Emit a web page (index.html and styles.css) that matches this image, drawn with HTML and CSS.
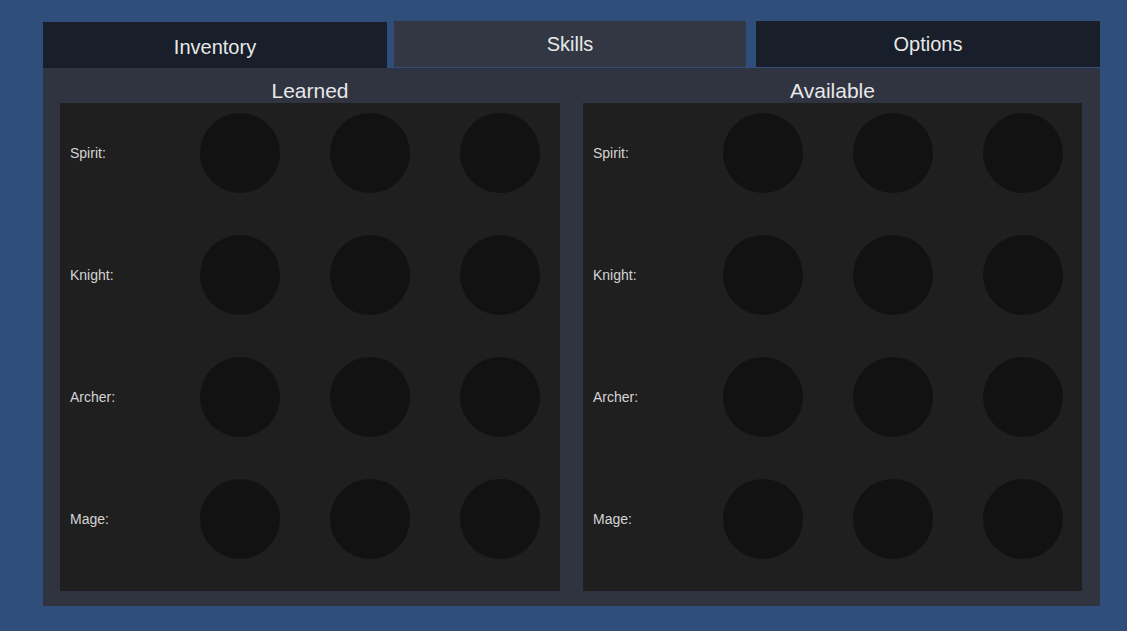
FILE: index.html
```html
<!DOCTYPE html>
<html>
<head>
<meta charset="utf-8">
<link rel="stylesheet" href="styles.css">
</head>
<body>
<div class="app">
  <div class="tabs">
    <div class="tab tab-inventory">Inventory</div>
    <div class="tab tab-skills">Skills</div>
    <div class="tab tab-options">Options</div>
  </div>
  <div class="panel">
    <div class="column">
      <div class="title">Learned</div>
      <div class="box">
        <div class="row"><div class="label">Spirit:</div><div class="slot"></div><div class="slot"></div><div class="slot"></div></div>
        <div class="row"><div class="label">Knight:</div><div class="slot"></div><div class="slot"></div><div class="slot"></div></div>
        <div class="row"><div class="label">Archer:</div><div class="slot"></div><div class="slot"></div><div class="slot"></div></div>
        <div class="row"><div class="label">Mage:</div><div class="slot"></div><div class="slot"></div><div class="slot"></div></div>
      </div>
    </div>
    <div class="column">
      <div class="title">Available</div>
      <div class="box">
        <div class="row"><div class="label">Spirit:</div><div class="slot"></div><div class="slot"></div><div class="slot"></div></div>
        <div class="row"><div class="label">Knight:</div><div class="slot"></div><div class="slot"></div><div class="slot"></div></div>
        <div class="row"><div class="label">Archer:</div><div class="slot"></div><div class="slot"></div><div class="slot"></div></div>
        <div class="row"><div class="label">Mage:</div><div class="slot"></div><div class="slot"></div><div class="slot"></div></div>
      </div>
    </div>
  </div>
</div>
</body>
</html>
```
FILE: styles.css
```css
html, body {
  margin: 0;
  padding: 0;
  background: #2f4e7a;
  font-family: "Liberation Sans", Arial, sans-serif;
}

.app {
  width: 1127px;
  height: 631px;
  box-sizing: border-box;
  padding: 21px 27px 0 43px;
}

.tabs {
  display: flex;
  align-items: flex-start;
  height: 47px;
}

.tab {
  height: 46px;
  box-sizing: border-box;
  display: flex;
  justify-content: center;
  align-items: center;
  padding-top: 1px;
  font-size: 20px;
  color: #e8e8e8;
  background: #181e2a;
}

.tab-inventory {
  width: 344px;
  margin-top: 1px;
  padding-top: 4px;
}

.tab-skills {
  width: 352px;
  margin-left: 7px;
  background: #323743;
}

.tab-options {
  width: 344px;
  margin-left: 10px;
}

.panel {
  height: 538px;
  box-sizing: border-box;
  background: #2f3440;
  padding: 0 18px 15px 17px;
  display: grid;
  grid-template-columns: 500px 499px;
  column-gap: 23px;
}

.column {
  display: flex;
  flex-direction: column;
}

.title {
  height: 35px;
  box-sizing: border-box;
  padding-top: 11px;
  line-height: 24px;
  font-size: 21px;
  color: #e8e8e8;
  text-align: center;
}

.box {
  flex: 1;
  background: #1f1f1f;
  padding-top: 10px;
  display: flex;
  flex-direction: column;
  gap: 42px;
}

.row {
  display: flex;
  align-items: center;
  height: 80px;
  gap: 50px;
}

.label {
  width: 140px;
  margin-right: -50px;
  box-sizing: border-box;
  padding-left: 10px;
  font-size: 14px;
  color: #d4d4d4;
}

.slot {
  width: 80px;
  height: 80px;
  border-radius: 50%;
  background: #121212;
}
```
